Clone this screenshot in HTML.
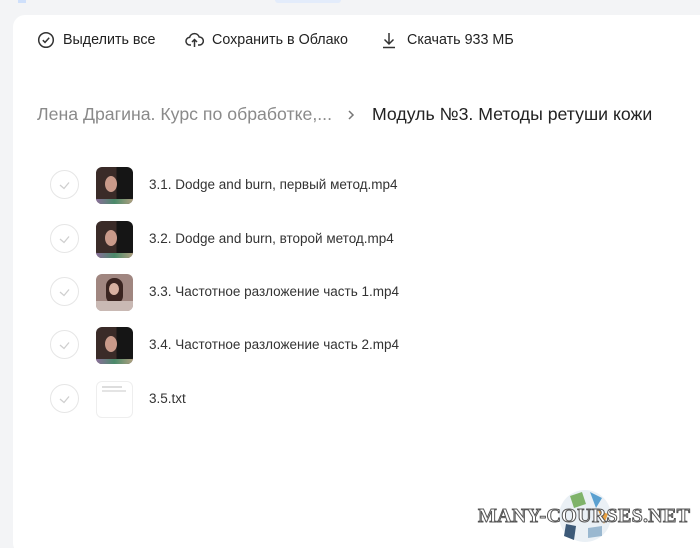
<!DOCTYPE html>
<html><head><meta charset="utf-8"><style>
html,body{margin:0;width:700px;height:548px;overflow:hidden}
body{background:#f3f4f6;font-family:"Liberation Sans",sans-serif;position:relative}
.card{position:absolute;left:13px;top:15px;width:700px;height:540px;background:#fff;border-radius:12px}
.t{position:absolute;font-size:14px;color:#222;white-space:nowrap}
.row{position:absolute;left:50px;height:36px}
.chk{position:absolute;left:0;top:3px;width:29px;height:29px;border:1px solid #e6e6e6;border-radius:50%;box-sizing:border-box}
.th{position:absolute;left:46px;top:0;width:37px;height:37px;border-radius:6px;overflow:hidden}
.nm{position:absolute;left:99px;top:10px;font-size:13.5px;color:#333;white-space:nowrap}
</style></head><body>
<div style="position:absolute;left:275px;top:0;width:66px;height:3px;background:#e3ecfb;border-radius:0 0 4px 4px"></div>
<div style="position:absolute;left:18px;top:0;width:8px;height:3px;background:#cfe0fb"></div>
<div class="card"></div>
<svg style="position:absolute;left:37px;top:31px" width="18" height="18" viewBox="0 0 18 18" fill="none" stroke="#333" stroke-width="1.5"><circle cx="9" cy="9" r="7.3"/><path d="M5.8 9.2l2.2 2.2 4.2-4.6"/></svg>
<div class="t" style="left:63px;top:32px;font-size:14.3px">Выделить все</div>
<svg style="position:absolute;left:185px;top:31px" width="19" height="18" viewBox="0 0 19 18" fill="none" stroke="#333" stroke-width="1.5"><path d="M6 14H5a3.8 3.8 0 0 1-.4-7.6A5 5 0 0 1 14.2 6a3.9 3.9 0 0 1 .3 8H13"/><path d="M9.5 16V8.5M7 11l2.5-2.5L12 11"/></svg>
<div class="t" style="left:212px;top:32px;font-size:14.3px">Сохранить в Облако</div>
<svg style="position:absolute;left:381px;top:31px" width="16" height="18" viewBox="0 0 16 18" fill="none" stroke="#333" stroke-width="1.5"><path d="M8 2v11M3.5 8.5L8 13l4.5-4.5M2 16.5h12"/></svg>
<div class="t" style="left:407px;top:32px;font-size:14.3px">Скачать 933 МБ</div>
<div class="t" style="left:37px;top:104px;font-size:17.7px;color:#8a8a8a">Лена Драгина. Курс по обработке,...</div>
<svg style="position:absolute;left:346px;top:109px" width="10" height="12" viewBox="0 0 10 12" fill="none" stroke="#777" stroke-width="1.5"><path d="M3 2l4 4-4 4"/></svg>
<div class="t" style="left:372px;top:104px;font-size:17.7px;color:#222">Модуль №3. Методы ретуши кожи</div>

<div class="row" style="top:167px"><div class="chk"></div><div class="th" style="background:linear-gradient(90deg,#3a2b28 0 55%,#151515 55%)"><div style="position:absolute;left:9px;top:9px;width:12px;height:16px;border-radius:50%;background:#c99a8a"></div><div style="position:absolute;left:0;bottom:0;width:37px;height:5px;background:linear-gradient(90deg,#8a6d9a,#4a8a6a,#b0a080)"></div></div><div class="nm">3.1. Dodge and burn, первый метод.mp4</div></div>
<div class="row" style="top:221px"><div class="chk"></div><div class="th" style="background:linear-gradient(90deg,#3a2b28 0 55%,#151515 55%)"><div style="position:absolute;left:9px;top:9px;width:12px;height:16px;border-radius:50%;background:#c99a8a"></div><div style="position:absolute;left:0;bottom:0;width:37px;height:5px;background:linear-gradient(90deg,#8a6d9a,#4a8a6a,#b0a080)"></div></div><div class="nm">3.2. Dodge and burn, второй метод.mp4</div></div>
<div class="row" style="top:274px"><div class="chk"></div><div class="th" style="background:#a08680"><div style="position:absolute;left:10px;top:4px;width:17px;height:26px;border-radius:8px;background:#3a2420"></div><div style="position:absolute;left:13px;top:9px;width:10px;height:12px;border-radius:50%;background:#d8b0a0"></div><div style="position:absolute;left:0;bottom:0;width:37px;height:10px;background:#c9b9b4"></div></div><div class="nm">3.3. Частотное разложение часть 1.mp4</div></div>
<div class="row" style="top:327px"><div class="chk"></div><div class="th" style="background:linear-gradient(90deg,#3a2b28 0 55%,#151515 55%)"><div style="position:absolute;left:9px;top:9px;width:12px;height:16px;border-radius:50%;background:#c99a8a"></div><div style="position:absolute;left:0;bottom:0;width:37px;height:5px;background:linear-gradient(90deg,#8a6d9a,#4a8a6a,#b0a080)"></div></div><div class="nm">3.4. Частотное разложение часть 2.mp4</div></div>
<div class="row" style="top:381px"><div class="chk"></div><div class="th" style="border:1px solid #eee;box-sizing:border-box;background:#fff"><div style="position:absolute;left:5px;top:4px;width:20px;height:2px;background:#ddd"></div><div style="position:absolute;left:5px;top:8px;width:24px;height:2px;background:#e4e4e4"></div></div><div class="nm">3.5.txt</div></div>
<svg style="position:absolute;left:0;top:0" width="700" height="548">
<g fill="none" stroke="#cfcfcf" stroke-width="1.3"><path d="M60 185l4 3.5 5-6"/><path d="M60 239l4 3.5 5-6"/><path d="M60 292l4 3.5 5-6"/><path d="M60 345l4 3.5 5-6"/><path d="M60 399l4 3.5 5-6"/></g>
<circle cx="585" cy="516" r="26" fill="#eaf0f5"/>
<path d="M570 496l12-4 4 12-12 4z" fill="#7fb36a"/><path d="M590 492l12 6-6 10z" fill="#5aa0d0"/><path d="M598 510l10 4-4 10z" fill="#e8a040"/><path d="M566 524l10 2-2 14-10-4z" fill="#3d5a78"/><path d="M588 528l14-2 0 10-14 2z" fill="#9ab8d0"/>
<text x="584" y="522" text-anchor="middle" textLength="212" font-family="Liberation Serif,serif" font-weight="bold" font-size="20" fill="#fff" stroke="#555" stroke-width="1">MANY-COURSES.NET</text>
</svg>
</body></html>
